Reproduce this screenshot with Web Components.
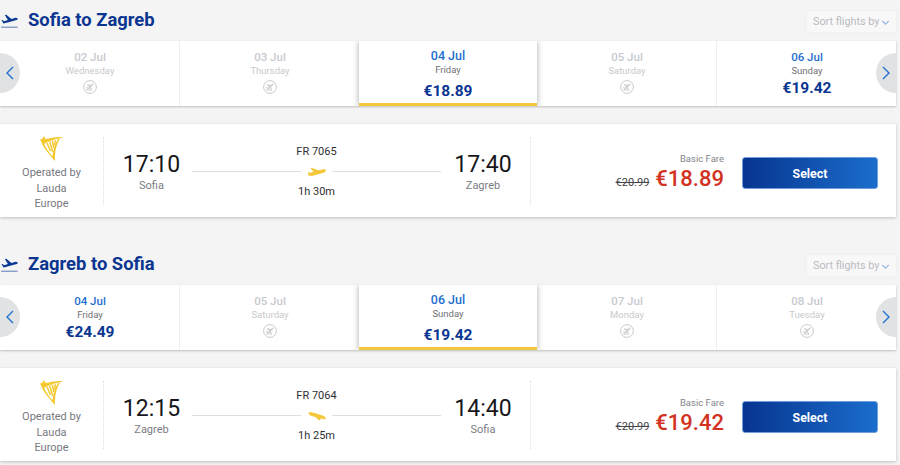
<!DOCTYPE html>
<html lang="en">
<head>
<meta charset="utf-8">
<title>Flights</title>
<style>
html,body{margin:0;padding:0;background:#f4f4f4;height:465px;overflow:hidden;font-family:Roboto,"Liberation Sans",sans-serif}
</style>
</head>
<body>
<flight-section title="Sofia to Zagreb">
  <date-strip>
    <date-cell date="02 Jul" day="Wednesday"></date-cell>
    <date-cell date="03 Jul" day="Thursday"></date-cell>
    <date-cell date="04 Jul" day="Friday" price="€18.89" selected></date-cell>
    <date-cell date="05 Jul" day="Saturday"></date-cell>
    <date-cell date="06 Jul" day="Sunday" price="€19.42"></date-cell>
  </date-strip>
  <flight-card dep="17:10" from="Sofia" arr="17:40" to="Zagreb" no="FR 7065" dur="1h 30m" old="€20.99" price="€18.89" kind="up"></flight-card>
</flight-section>
<flight-section title="Zagreb to Sofia">
  <date-strip>
    <date-cell date="04 Jul" day="Friday" price="€24.49"></date-cell>
    <date-cell date="05 Jul" day="Saturday"></date-cell>
    <date-cell date="06 Jul" day="Sunday" price="€19.42" selected></date-cell>
    <date-cell date="07 Jul" day="Monday"></date-cell>
    <date-cell date="08 Jul" day="Tuesday"></date-cell>
  </date-strip>
  <flight-card dep="12:15" from="Zagreb" arr="14:40" to="Sofia" no="FR 7064" dur="1h 25m" old="€20.99" price="€19.42" kind="down"></flight-card>
</flight-section>
<script>
class FlightSection extends HTMLElement{
  constructor(){super();this.attachShadow({mode:'open'})}
  connectedCallback(){
    this.shadowRoot.innerHTML=`<style>
      :host{display:block;width:896px;height:244px;font-family:Roboto,"Liberation Sans",sans-serif}
      header{display:flex;align-items:center;height:41px;box-sizing:border-box;padding:0}
      .ic{width:18px;height:18px;fill:#0a3a94;margin-right:10px;flex:none}
      h2{margin:0;font-size:18.4px;font-weight:700;color:#0a3590;line-height:1;flex:1}
      .sort{display:flex;align-items:center;gap:1px;box-sizing:border-box;width:89px;height:21px;margin-top:2px;padding-left:6px;background:#f8f8f8;box-shadow:0 0 1px rgba(0,0,0,.08);font-size:10.8px;color:#b9bbbf;white-space:nowrap}
      .sort svg{width:9px;height:5px;margin:1px 0 0 1px;fill:none;stroke:#8fb6e6;stroke-width:1.3}
    </style>
    <header>
      <svg class="ic" viewBox="0 0 24 24"><path d="M1.500 19.500h22v1.600h-22z" opacity=".55"/><path d="M23 8.900c-.3-1-1.300-1.500-2.300-1.200l-5.400 1.500-6.900-5.600-2 .5 4.100 6.700-5 1.400-2-1.500-1.400.4 2.600 4.400 1.600-.4 16-4.300c1-.3 1.900-1.200 1.700-2.300z"/></svg>
      <h2>${this.getAttribute('title')}</h2>
      <div class="sort">Sort flights by<svg viewBox="0 0 10 6"><path d="M1 1l4 4 4-4"/></svg></div>
    </header>
    <slot></slot>`;
    this.removeAttribute('title');
  }
}
class DateStrip extends HTMLElement{
  constructor(){super();this.attachShadow({mode:'open'})}
  connectedCallback(){
    this.shadowRoot.innerHTML=`<style>
      :host{display:flex;position:relative;height:65px;background:#fff;box-shadow:0 1px 2px rgba(0,0,0,.22);margin-bottom:18px}
      .arrow{position:absolute;top:12px;width:20px;height:40px;background:#e1e2e4;display:flex;align-items:center;justify-content:center;z-index:2}
      .l{left:0;border-radius:0 20px 20px 0}
      .r{right:0;border-radius:20px 0 0 20px}
      svg{width:8px;height:14px;fill:none;stroke:#2371cf;stroke-width:1.4}
    </style>
    <div class="arrow l"><svg viewBox="0 0 8 14"><path d="M7 1L1 7l6 6"/></svg></div>
    <slot></slot>
    <div class="arrow r"><svg viewBox="0 0 8 14"><path d="M1 1l6 6-6 6"/></svg></div>`;
  }
}
class DateCell extends HTMLElement{
  constructor(){super();this.attachShadow({mode:'open'})}
  connectedCallback(){
    const price=this.getAttribute('price');
    this.shadowRoot.innerHTML=`<style>
      :host{display:flex;flex:1 1 0;flex-direction:column;align-items:center;box-sizing:border-box;padding:9px 0 0 1px;border-right:1px solid #eeeff0;position:relative;text-align:center}
      :host(:last-of-type){border-right:0}
      :host([selected]){padding:7.500px 0 0;border-right:0;margin-left:-1px;background:#fff;box-shadow:0 0 6px rgba(0,0,0,.35);clip-path:inset(0 -8px 0 -8px);border-bottom:3px solid #f3c93b;z-index:1}
      .d{font-size:11.5px;font-weight:500;line-height:14px;color:#c8cacf}
      .w{font-size:9.5px;line-height:14px;color:#c9cacc}
      :host([price]) .d{color:#1f6fd0}
      :host([price]) .w{color:#6f7075}
      :host([selected]) .d{font-size:12.5px}
      .p{font-size:15.5px;font-weight:700;line-height:20px;color:#0a3590}
      :host([selected]) .p{margin-top:4px}
      .i{height:18px;display:flex;align-items:center}
      svg{width:14px;height:14px;fill:none;stroke:#c9cacd}
    </style>
    <div class="d">${this.getAttribute('date')}</div>
    <div class="w">${this.getAttribute('day')}</div>
    ${price?`<div class="p">${price}</div>`:`<div class="i"><svg viewBox="0 0 14 14"><circle cx="7" cy="7" r="6.400"/><path d="M3.700 10.300l6.600-6.600" stroke-width="1.300"/><path d="M7 6.500L4 5.200l.8-.6L8 5.500M7.500 7l1.300 3-.6.8L7.300 7.600M4 8.300l-1-.5.400-.4 1.400.3M5.700 10l.5 1 .4-.4-.3-1.400" fill="#c9cacd" stroke-width=".5"/></svg></div>`}`;
  }
}
class FlightCard extends HTMLElement{
  constructor(){super();this.attachShadow({mode:'open'})}
  connectedCallback(){
    const a=n=>this.getAttribute(n);
    const plane=a('kind')==='up'
      ?'<path d="M0 7.300l3.800.7L16.500 4.500 18 2.300 17 1l-6.500 1.200L4 0H2.500l3 3.800-3.300 1L.3 4z"/>'
      :'<path d="M0 1L2.500 0l5 1.300L11.500 2.500 16 4l2 2.400-1.200 1-4.300-1.100.2 1.700H10.500L7.500 5 2.700 3.700z"/>';
    this.shadowRoot.innerHTML=`<style>
      :host{display:flex;height:93px;width:896px;background:#fff;box-shadow:0 1px 3px rgba(0,0,0,.22);font-family:Roboto,"Liberation Sans",sans-serif}
      .op{flex:none;width:103px;display:flex;flex-direction:column;align-items:center;padding-top:11px;box-sizing:border-box;font-size:11px;line-height:15.500px;color:#77787e;text-align:center}
      .op svg{width:25px;height:26px;margin-bottom:4px}
      .op div{width:62px}
      .sep{flex:none;width:0;margin:13px 0 12px;border-left:1px dotted #dcdddf}
      .mid{flex:none;width:426px;box-sizing:border-box;padding-left:8px;display:flex}
      .t{flex:none;width:80px;padding-top:26px;text-align:center}
      .t:first-child{box-sizing:border-box;padding-right:1px}
      .t.b{width:84px}
      .t b{display:block;font-weight:400;font-size:23px;line-height:29px;color:#17171a}
      .t span{display:block;font-size:11px;line-height:14px;color:#7b7c82}
      .c{flex:none;width:249px;padding-top:21px;text-align:center;font-size:11px;line-height:14px;color:#2e2f33}
      .line{display:flex;align-items:center;height:25px;margin-bottom:1px}
      .line i{flex:1;height:1.500px;background:#dedfe1}
      .line svg{width:18px;height:8px;margin:0 6.500px;fill:#f3c93b}
      .fare{flex:1;display:flex;justify-content:flex-end;align-items:flex-start;padding:29px 18px 0 0}
      .pr{text-align:right;margin-right:18px}
      .lbl{font-size:9.500px;line-height:12px;color:#84858b}
      .row{display:flex;align-items:baseline;gap:6px;margin-top:1px}
      s{font-size:11px;color:#45464a}
      .big{font-size:22px;font-weight:500;line-height:26px;color:#d2321f}
      button{all:unset;box-sizing:border-box;width:136px;height:32px;margin-top:4px;border-radius:3px;border:1px solid #6f9fdc;background:linear-gradient(90deg,#073590,#1b6dcc);color:#fff;font-size:12.400px;font-weight:700;text-align:center;line-height:31px}
    </style>
    <div class="op">
      <svg viewBox="0 0 25 26"><g fill="#f4c82f"><path d="M1 4.500C3 4.300 4.200 3 5 1l1.500 3C11 3.500 17 1.500 24.500 2.200 20 3.200 13 5 8 7.300 6.500 8 5 9.500 3.500 9.500 2.500 7.500 1.800 6 1 4.500z"/><path d="M2.800 8.500l2.400.4C7 13 10.500 18 13.500 21.500c.4-6 2.300-12.500 5.500-17.500l2-.4C17.500 9.500 15.500 17 16 26 11 20.500 5.500 14 2.800 8.500z"/></g><g stroke="#f4c82f" stroke-width="1.500" fill="none"><path d="M8 8l3.500 8M10.700 6.700l3 10M13.500 5.800l1.300 7.200M16.200 5.200l-.4 5"/></g></svg>
      <div>Operated by Lauda Europe</div>
    </div>
    <div class="sep"></div>
    <div class="mid">
      <div class="t"><b>${a('dep')}</b><span>${a('from')}</span></div>
      <div class="c"><div>${a('no')}</div><div class="line"><i></i><svg viewBox="0 0 18 8">${plane}</svg><i></i></div><div>${a('dur')}</div></div>
      <div class="t b"><b>${a('arr')}</b><span>${a('to')}</span></div>
    </div>
    <div class="sep"></div>
    <div class="fare">
      <div class="pr"><div class="lbl">Basic Fare</div><div class="row"><s>${a('old')}</s><span class="big">${a('price')}</span></div></div>
      <button>Select</button>
    </div>`;
  }
}
customElements.define('flight-section',FlightSection);
customElements.define('date-strip',DateStrip);
customElements.define('date-cell',DateCell);
customElements.define('flight-card',FlightCard);
</script>
</body>
</html>
